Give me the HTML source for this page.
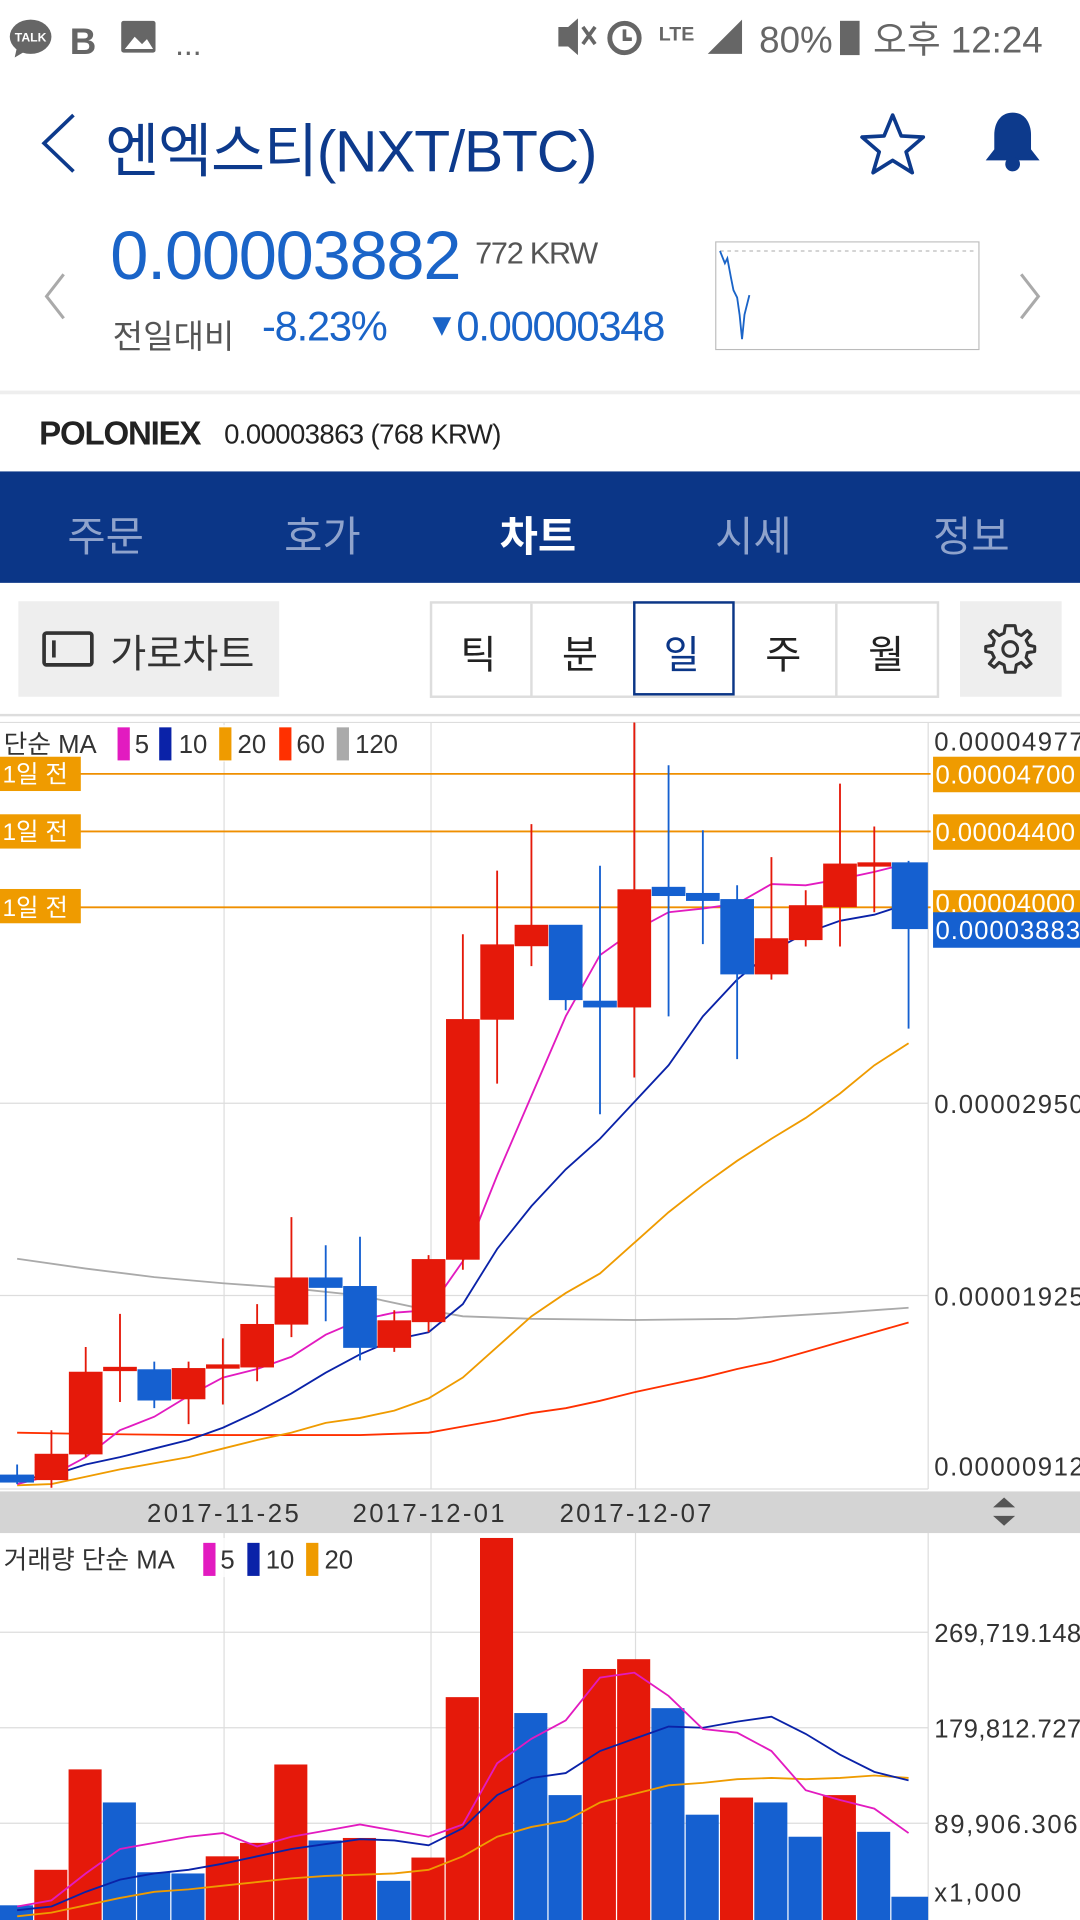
<!DOCTYPE html>
<html><head><meta charset="utf-8"><style>
html,body{margin:0;padding:0;background:#fff;overflow:hidden}
body{width:1080px;height:1920px}
#w{position:absolute;left:0;top:0;width:882px;height:1568px;transform:scale(1.2244898);transform-origin:0 0;font-family:"Liberation Sans","Noto Sans CJK KR",sans-serif}
.a{position:absolute;white-space:nowrap}
</style></head><body><div id="w">
<!-- status bar -->
<svg class="a" style="left:0;top:0" width="882" height="65">
<ellipse cx="25" cy="30" rx="17" ry="14" fill="#666"/><path d="M14 38 L12 47 L22 41Z" fill="#666"/>
<text x="25" y="34" font-size="10" fill="#fff" text-anchor="middle" font-family="Liberation Sans" font-weight="bold">TALK</text>
<text x="57" y="44" font-size="30" fill="#666" font-weight="bold" font-family="Liberation Sans">B</text>
<rect x="99" y="17" width="28" height="26" rx="2" fill="#666"/><path d="M102 40 L110 30 L116 36 L120 32 L125 40Z" fill="#fff"/>
<text x="143" y="45" font-size="26" fill="#666" font-family="Liberation Sans">...</text>
<path d="M456 22h8l8-7v30l-8-7h-8z" fill="#666"/><path d="M476 22l10 14M486 22l-10 14" stroke="#666" stroke-width="3"/>
<circle cx="510" cy="31" r="12" fill="none" stroke="#666" stroke-width="4"/><path d="M510 24v8h6" stroke="#666" stroke-width="3" fill="none"/>
<text x="538" y="33" font-size="16" fill="#666" font-family="Liberation Sans" font-weight="bold">LTE</text>
<path d="M578 44L606 16V44Z" fill="#666"/>
<text x="620" y="43" font-size="30" fill="#666" font-family="Liberation Sans">80%</text>
<rect x="686" y="17" width="16" height="28" fill="#666"/>
<text x="713" y="43" font-size="30" fill="#666" font-family="Liberation Sans,Noto Sans CJK KR">오후 12:24</text>
</svg>
<!-- title -->
<svg class="a" style="top:90px;left:30px" width="40" height="55"><path d="M30 4 L6 27 L30 50" fill="none" stroke="#0d3a8c" stroke-width="3"/></svg>
<div class="a" style="left:86px;top:84px;font-size:48px;color:#0d3a8c;letter-spacing:-1px">엔엑스티(NXT/BTC)</div>
<svg class="a" style="left:700px;top:90px" width="60" height="55"><path d="M29 4 L36 21 L54 22 L40 34 L45 51 L29 41 L13 51 L18 34 L4 22 L22 21Z" fill="none" stroke="#0d3a8c" stroke-width="3" stroke-linejoin="round"/></svg>
<svg class="a" style="left:800px;top:88px" width="55" height="55"><path d="M27 4 C16 4 12 14 12 22 V34 L5 43 H49 L42 34 V22 C42 14 38 4 27 4Z" fill="#0d3a8c"/><circle cx="27" cy="46" r="6" fill="#0d3a8c"/></svg>
<!-- price -->
<svg class="a" style="left:30px;top:220px" width="30" height="45"><path d="M22 4 L8 22 L22 40" fill="none" stroke="#aaa" stroke-width="2.5"/></svg>
<svg class="a" style="left:826px;top:220px" width="30" height="45"><path d="M8 4 L22 22 L8 40" fill="none" stroke="#aaa" stroke-width="2.5"/></svg>
<div class="a" style="left:90px;top:176px;font-size:56px;color:#1a64c8;letter-spacing:-1px">0.00003882</div>
<div class="a" style="left:388px;top:193px;font-size:25px;color:#555;letter-spacing:-1px">772 KRW</div>
<div class="a" style="left:92px;top:253px;font-size:27px;color:#555">전일대비</div>
<div class="a" style="left:214px;top:248px;font-size:34px;color:#1a64c8;letter-spacing:-1px">-8.23%</div>
<div class="a" style="left:348px;top:248px;font-size:34px;color:#1a64c8;letter-spacing:-1px"><span style="font-size:26px;position:relative;top:-4px">▼</span>0.00000348</div>
<svg class="a" style="left:584px;top:197px" width="216" height="89"><rect x="0.5" y="0.5" width="215" height="88" fill="#fff" stroke="#bbb"/><path d="M4 8H212" stroke="#bbb" stroke-dasharray="3 3"/><path d="M4 8 L8 18 L10 14 L13 30 L15 40 L18 46 L20 60 L22 80 L24 60 L28 44" fill="none" stroke="#1a64c8" stroke-width="1.5"/></svg>
<div class="a" style="left:0;top:319px;width:882px;height:3px;background:#eee"></div>
<div class="a" style="left:32px;top:339px;font-size:27px;font-weight:bold;color:#222;letter-spacing:-1px">POLONIEX</div>
<div class="a" style="left:183px;top:342px;font-size:22.5px;color:#222;letter-spacing:-0.5px">0.00003863 (768 KRW)</div>
<!-- nav -->
<div class="a" style="left:0;top:385px;width:882px;height:91px;background:#0b3687"></div>
<div class="a" style="left:55px;top:411px;font-size:34px;color:#8fa3cc">주문</div>
<div class="a" style="left:232px;top:411px;font-size:34px;color:#8fa3cc">호가</div>
<div class="a" style="left:408px;top:411px;font-size:34px;color:#fff;font-weight:bold">차트</div>
<div class="a" style="left:584px;top:411px;font-size:34px;color:#8fa3cc">시세</div>
<div class="a" style="left:762px;top:411px;font-size:34px;color:#8fa3cc">정보</div>
<!-- controls -->
<div class="a" style="left:15px;top:491px;width:213px;height:78px;background:#eee"></div>
<svg class="a" style="left:34px;top:515px" width="45" height="32"><rect x="2" y="2" width="39" height="26" rx="2" fill="none" stroke="#333" stroke-width="3"/><path d="M10 8V22" stroke="#333" stroke-width="3"/></svg>
<div class="a" style="left:90px;top:509px;font-size:32px;color:#333">가로차트</div>
<div class="a" style="left:351px;top:491px;width:412px;height:75px;border:2px solid #ddd;background:#fff"></div>
<div class="a" style="left:433px;top:493px;width:2px;height:75px;background:#ddd"></div>
<div class="a" style="left:682px;top:493px;width:2px;height:75px;background:#ddd"></div>
<div class="a" style="left:517px;top:491px;width:79px;height:73px;border:2px solid #0b3687"></div>
<div class="a" style="left:376px;top:510px;font-size:32px;color:#222">틱</div>
<div class="a" style="left:459px;top:510px;font-size:32px;color:#222">분</div>
<div class="a" style="left:542px;top:510px;font-size:32px;color:#0b3687">일</div>
<div class="a" style="left:625px;top:510px;font-size:32px;color:#222">주</div>
<div class="a" style="left:709px;top:510px;font-size:32px;color:#222">월</div>
<div class="a" style="left:784px;top:491px;width:83px;height:78px;background:#eee"></div>
<svg class="a" style="left:803px;top:508px" width="44" height="44"><path d="M22 3 L26 3 L27 9 L31 11 L36 7 L39 10 L35 15 L37 19 L42 20 L42 24 L36 25 L35 29 L39 34 L35 37 L31 33 L27 35 L26 41 L18 41 L17 35 L13 33 L9 37 L5 34 L9 29 L7 25 L2 24 L2 20 L8 19 L9 15 L5 10 L8 7 L13 11 L17 9 L18 3Z" fill="none" stroke="#333" stroke-width="2.5" stroke-linejoin="round"/><circle cx="22" cy="22" r="6" fill="none" stroke="#333" stroke-width="2.5"/></svg>
<div class="a" style="left:0;top:583px;width:882px;height:2px;background:#ddd"></div>
<!-- chart -->
<svg class="a" style="left:0;top:0" width="882" height="1568" font-family="Liberation Sans,Noto Sans CJK KR,sans-serif">
<g stroke="#ddd" stroke-width="1">
<path d="M0 590H882M0 901H758M0 1058H758M0 1216H758M183 590V1216M352 590V1216M519 590V1216M758 590V1216"/>
<path d="M0 1333H758M0 1411H758M0 1489H758M183 1252V1568M352 1252V1568M519 1252V1568M758 1252V1568"/>
</g>
<g stroke="#ef8f00" stroke-width="1.5"><path d="M0 632H760M0 679H760M0 741H760"/></g>
<g fill="none" stroke-width="1.5">
<polyline stroke="#aaa" points="14,1028 70,1036 126,1043 182,1048 238,1052 294,1058 350,1070 378,1075 434,1077 518,1078 602,1077 686,1072 742,1068"/>
<polyline stroke="#ff3000" points="14,1170 70,1171 154,1172 238,1172 294,1172 350,1170 378,1165 406,1160 434,1154 462,1150 490,1144 518,1137 546,1131 574,1125 602,1118 630,1112 658,1104 686,1096 714,1088 742,1080"/>
<polyline stroke="#ef9b00" points="14,1213 42,1212 70,1206 98,1200 126,1195 154,1190 182,1183 210,1176 238,1170 266,1162 294,1158 322,1152 350,1142 378,1125 406,1100 434,1075 462,1056 490,1040 518,1015 546,990 574,968 602,948 630,930 658,913 686,893 714,870 742,852"/>
<polyline stroke="#0a22a8" points="0,1207 14,1208 42,1205 70,1196 98,1190 126,1183 154,1176 182,1166 210,1153 238,1138 266,1121 294,1106 322,1094 350,1088 378,1065 406,1020 434,985 462,955 490,930 518,900 546,870 574,830 602,800 630,777 658,762 686,752 714,747 742,738"/>
<polyline stroke="#e21bc0" points="14,1212 42,1205 70,1190 98,1168 126,1157 154,1140 182,1125 210,1118 238,1108 266,1090 294,1078 322,1072 350,1070 378,1030 406,960 434,895 462,830 490,780 518,760 546,745 574,742 602,738 630,722 658,723 686,718 714,712 742,705"/>
</g>
<g stroke-width="1.5">
<g stroke="#e5190a" fill="#e5190a">
<path d="M42 1168V1215M70 1100V1190M98 1073V1145M154 1112V1163M182 1093V1147M210 1065V1128M238 994V1092M322 1070V1104M350 1025V1088M378 763V1037M406 711V885M434 673V789M518 590V880M630 700V800M658 727V773M686 640V773M714 675V745"/>
<rect x="29" y="1188" width="26" height="20"/><rect x="57" y="1121" width="26" height="66"/><rect x="85" y="1117" width="26" height="2"/><rect x="141" y="1118" width="26" height="24"/><rect x="169" y="1115" width="26" height="2"/><rect x="197" y="1082" width="26" height="34"/><rect x="225" y="1044" width="26" height="37"/><rect x="309" y="1079" width="26" height="21"/><rect x="337" y="1029" width="26" height="50"/><rect x="365" y="833" width="26" height="195"/><rect x="393" y="772" width="26" height="60"/><rect x="421" y="756" width="26" height="16"/><rect x="505" y="727" width="26" height="95"/><rect x="617" y="767" width="26" height="28"/><rect x="645" y="740" width="26" height="27"/><rect x="673" y="706" width="26" height="34"/><rect x="701" y="705" width="26" height="2"/>
</g>
<g stroke="#1560d0" fill="#1560d0">
<path d="M14 1196V1212M126 1112V1150M266 1017V1079M294 1010V1111M462 756V825M490 707V910M546 625V830M574 678V771M602 723V865M742 703V840"/>
<rect x="0" y="1205" width="27" height="5"/><rect x="113" y="1119" width="26" height="24"/><rect x="253" y="1044" width="26" height="7"/><rect x="281" y="1051" width="26" height="49"/><rect x="449" y="756" width="26" height="60"/><rect x="477" y="818" width="26" height="4"/><rect x="533" y="725" width="26" height="6"/><rect x="561" y="730" width="26" height="5"/><rect x="589" y="735" width="26" height="60"/><rect x="729" y="705" width="28" height="53"/>
</g>
</g>
<rect x="0" y="592" width="338" height="30" fill="#fff" opacity="0.8"/>
<text x="3" y="615" font-size="21" fill="#333">단순 MA</text>
<rect x="96" y="594" width="10" height="27" fill="#e21bc0"/><text x="110" y="615" font-size="21" fill="#333">5</text>
<rect x="130" y="594" width="10" height="27" fill="#0a22a8"/><text x="146" y="615" font-size="21" fill="#333">10</text>
<rect x="179" y="594" width="10" height="27" fill="#ef9b00"/><text x="194" y="615" font-size="21" fill="#333">20</text>
<rect x="228" y="594" width="10" height="27" fill="#ff3000"/><text x="242" y="615" font-size="21" fill="#333">60</text>
<rect x="275" y="594" width="10" height="27" fill="#aaa"/><text x="290" y="615" font-size="21" fill="#333">120</text>
<g font-size="20" fill="#fff">
<rect x="0" y="618" width="66" height="28" fill="#ef9b00"/><text x="2" y="639">1일 전</text>
<rect x="0" y="665" width="66" height="28" fill="#ef9b00"/><text x="2" y="686">1일 전</text>
<rect x="0" y="726" width="66" height="28" fill="#ef9b00"/><text x="2" y="748">1일 전</text>
</g>
<g font-size="21" fill="#333">
<text x="763" y="613" textLength="122">0.00004977</text>
<text x="763" y="909" textLength="122">0.00002950</text>
<text x="763" y="1066" textLength="122">0.00001925</text>
<text x="763" y="1205" textLength="122">0.00000912</text>
</g>
<g font-size="21" fill="#fff">
<rect x="762" y="618" width="120" height="29" fill="#ef9b00"/><text x="764" y="640" textLength="114">0.00004700</text>
<rect x="762" y="665" width="120" height="29" fill="#ef9b00"/><text x="764" y="687" textLength="114">0.00004400</text>
<rect x="762" y="727" width="120" height="20" fill="#ef9b00"/><text x="764" y="745" textLength="114">0.00004000</text>
<rect x="762" y="745" width="120" height="29" fill="#1560d0"/><text x="764" y="767" textLength="118">0.00003883</text>
</g>
<rect x="0" y="1218" width="882" height="34" fill="#d4d4d4"/>
<g font-size="21" fill="#333"><text x="120" y="1243" textLength="124">2017-11-25</text><text x="288" y="1243" textLength="124">2017-12-01</text><text x="457" y="1243" textLength="124">2017-12-07</text></g>
<path d="M811 1231L820 1223L829 1231ZM811 1238L820 1246L829 1238Z" fill="#555"/>
<g fill="#e5190a">
<rect x="28" y="1527" width="27" height="41"/><rect x="56" y="1445" width="27" height="123"/><rect x="168" y="1516" width="27" height="52"/><rect x="196" y="1505" width="27" height="63"/><rect x="224" y="1441" width="27" height="127"/><rect x="280" y="1501" width="27" height="67"/><rect x="336" y="1517" width="27" height="51"/><rect x="364" y="1386" width="27" height="182"/><rect x="392" y="1256" width="27" height="312"/><rect x="476" y="1363" width="27" height="205"/><rect x="504" y="1355" width="27" height="213"/><rect x="588" y="1468" width="27" height="100"/><rect x="672" y="1466" width="27" height="102"/>
</g>
<g fill="#1560d0">
<rect x="0" y="1556" width="27" height="12"/><rect x="84" y="1472" width="27" height="96"/><rect x="112" y="1529" width="27" height="39"/><rect x="140" y="1530" width="27" height="38"/><rect x="252" y="1503" width="27" height="65"/><rect x="308" y="1536" width="27" height="32"/><rect x="420" y="1399" width="27" height="169"/><rect x="448" y="1466" width="27" height="102"/><rect x="532" y="1395" width="27" height="173"/><rect x="560" y="1482" width="27" height="86"/><rect x="616" y="1472" width="27" height="96"/><rect x="644" y="1500" width="27" height="68"/><rect x="700" y="1496" width="27" height="72"/><rect x="728" y="1549" width="30" height="19"/>
</g>
<g fill="none" stroke-width="1.5">
<polyline stroke="#ef9b00" points="14,1565 42,1562 70,1556 98,1550 126,1545 154,1543 182,1540 210,1537 238,1534 266,1532 294,1531 322,1530 350,1527 378,1516 406,1500 434,1492 462,1487 490,1472 518,1465 546,1458 574,1456 602,1453 630,1452 658,1453 686,1452 714,1450 742,1452"/>
<polyline stroke="#0a22a8" points="14,1560 42,1557 70,1545 98,1535 126,1530 154,1527 182,1522 210,1516 238,1510 266,1506 294,1502 322,1503 350,1507 378,1493 406,1466 434,1452 462,1448 490,1430 518,1420 546,1410 574,1411 602,1406 630,1402 658,1416 686,1433 714,1447 742,1454"/>
<polyline stroke="#e21bc0" points="14,1557 42,1552 70,1530 98,1510 126,1505 154,1500 182,1497 210,1508 238,1500 266,1495 294,1490 322,1495 350,1500 378,1490 406,1440 434,1420 462,1405 490,1370 518,1366 546,1385 574,1412 602,1415 630,1430 658,1462 686,1470 714,1477 742,1497"/>
</g>
<rect x="0" y="1256" width="292" height="32" fill="#fff" opacity="0.8"/>
<text x="3" y="1281" font-size="21" fill="#333">거래량 단순 MA</text>
<rect x="166" y="1260" width="10" height="27" fill="#e21bc0"/><text x="180" y="1281" font-size="21" fill="#333">5</text>
<rect x="202" y="1260" width="10" height="27" fill="#0a22a8"/><text x="217" y="1281" font-size="21" fill="#333">10</text>
<rect x="250" y="1260" width="10" height="27" fill="#ef9b00"/><text x="265" y="1281" font-size="21" fill="#333">20</text>
<g font-size="21" fill="#333"><text x="763" y="1341" textLength="120">269,719.148</text><text x="763" y="1419" textLength="120">179,812.727</text><text x="763" y="1497" textLength="117">89,906.306</text><text x="763" y="1553" textLength="71">x1,000</text></g>
</svg>
</div></body></html>
